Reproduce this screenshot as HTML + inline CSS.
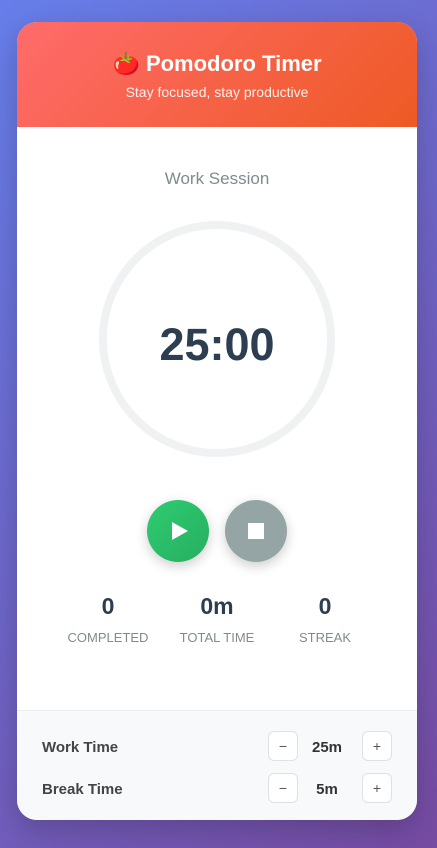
<!DOCTYPE html>
<html><head><style>
*{margin:0;padding:0;box-sizing:border-box}
body{width:437px;height:848px;background:linear-gradient(135deg,#667eea,#764ba2);font-family:"Liberation Sans","DejaVu Sans",sans-serif;position:relative;overflow:hidden}
.card{position:absolute;left:17px;top:22px;width:400px;height:798px;background:#fff;border-radius:20px;overflow:hidden;box-shadow:0 10px 30px rgba(0,0,0,.2)}
.hdr{height:105px;background:linear-gradient(135deg,#ff6b6b,#ee5a24);color:#fff;text-align:center}
.hdr h1{font-size:22px;font-weight:bold;padding-top:29px;line-height:26px}
.hdr p{font-size:14px;opacity:.9;margin-top:7px}
.sess{position:absolute;top:147px;width:100%;text-align:center;color:#7f8c8d;font-size:17px}
.ring{position:absolute;left:82px;top:199px;width:236px;height:236px;border-radius:50%;border:8px solid #f0f1f3}
.time{position:absolute;top:297px;width:100%;text-align:center;font-size:45px;font-weight:bold;color:#2c3e50}
.btn{position:absolute;top:478px;width:62px;height:62px;border-radius:50%;box-shadow:0 4px 12px rgba(0,0,0,.2)}
.stat{position:absolute;top:570px;width:120px;text-align:center}
.stat b{display:block;font-size:23px;color:#2c3e50;line-height:28px}
.stat span{display:block;font-size:13px;color:#7f8c8d;margin-top:10px}
.set{position:absolute;top:688px;left:0;width:100%;height:110px;background:#f8f9fa;border-top:1px solid #e9ecef}
.row{position:absolute;left:25px;font-size:15px;font-weight:bold;color:#444}
.sb{position:absolute;width:30px;height:30px;border:1px solid #dee2e6;border-radius:6px;background:#fff;text-align:center;line-height:28px;font-size:14px;color:#555}
.val{position:absolute;width:60px;text-align:center;font-size:15px;font-weight:bold;color:#333}
</style></head><body>
<div class="card">
<div class="hdr"><h1>🍅 Pomodoro Timer</h1><p>Stay focused, stay productive</p></div>
<div class="sess">Work Session</div>
<div class="ring"></div>
<div class="time">25:00</div>
<div class="btn" style="left:130px;background:linear-gradient(135deg,#2ecc71,#27ae60)"><svg width="62" height="62"><path d="M25 22 L41 31 L25 40Z" fill="#fff"/></svg></div>
<div class="btn" style="left:208px;background:#95a5a6"><svg width="62" height="62"><rect x="23" y="23" width="16" height="16" fill="#fff"/></svg></div>
<div class="stat" style="left:31px"><b>0</b><span>COMPLETED</span></div>
<div class="stat" style="left:140px"><b>0m</b><span>TOTAL TIME</span></div>
<div class="stat" style="left:248px"><b>0</b><span>STREAK</span></div>
<div class="set">
<div class="row" style="top:28px">Work Time</div>
<div class="sb" style="left:251px;top:20px">−</div><div class="val" style="left:280px;top:28px">25m</div><div class="sb" style="left:345px;top:20px">+</div>
<div class="row" style="top:70px">Break Time</div>
<div class="sb" style="left:251px;top:62px">−</div><div class="val" style="left:280px;top:70px">5m</div><div class="sb" style="left:345px;top:62px">+</div>
</div>
</div>
</body></html>
